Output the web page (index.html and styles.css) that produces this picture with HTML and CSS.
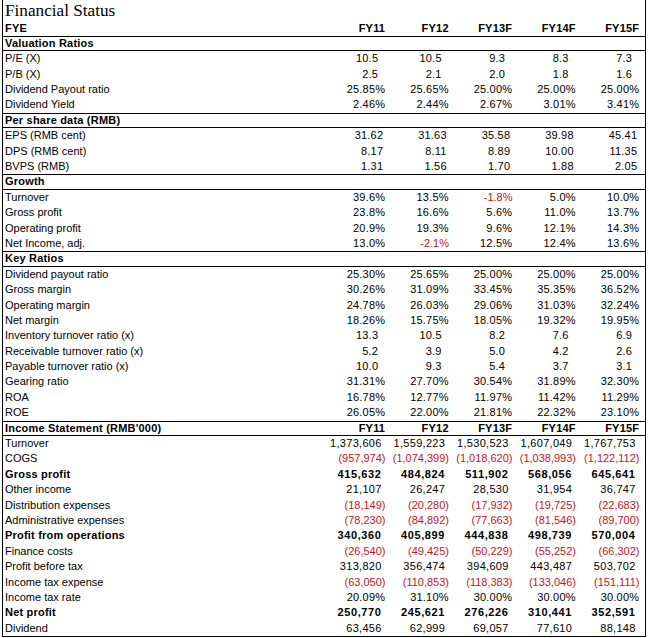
FILE: index.html
```html
<!DOCTYPE html>
<html>
<head>
<meta charset="utf-8">
<link rel="stylesheet" href="styles.css">
</head>
<body>
<div class="sheet">
  <div class="title">Financial Status</div>

  <div class="row hdr-plain"><span class="lbl b">FYE</span><span class="v b">FY11</span><span class="v b">FY12</span><span class="v b">FY13F</span><span class="v b">FY14F</span><span class="v b">FY15F</span></div>

  <div class="row sec"><span class="lbl b">Valuation Ratios</span></div>
  <div class="row"><span class="lbl">P/E (X)</span><span class="v d">10.5</span><span class="v d">10.5</span><span class="v d">9.3</span><span class="v d">8.3</span><span class="v d">7.3</span></div>
  <div class="row"><span class="lbl">P/B (X)</span><span class="v d">2.5</span><span class="v d">2.1</span><span class="v d">2.0</span><span class="v d">1.8</span><span class="v d">1.6</span></div>
  <div class="row"><span class="lbl">Dividend Payout ratio</span><span class="v">25.85%</span><span class="v">25.65%</span><span class="v">25.00%</span><span class="v">25.00%</span><span class="v">25.00%</span></div>
  <div class="row"><span class="lbl">Dividend Yield</span><span class="v">2.46%</span><span class="v">2.44%</span><span class="v">2.67%</span><span class="v">3.01%</span><span class="v">3.41%</span></div>

  <div class="row sec"><span class="lbl b">Per share data (RMB)</span></div>
  <div class="row"><span class="lbl">EPS (RMB cent)</span><span class="v e">31.62</span><span class="v e">31.63</span><span class="v e">35.58</span><span class="v e">39.98</span><span class="v e">45.41</span></div>
  <div class="row"><span class="lbl">DPS (RMB cent)</span><span class="v e">8.17</span><span class="v e">8.11</span><span class="v e">8.89</span><span class="v e">10.00</span><span class="v e">11.35</span></div>
  <div class="row"><span class="lbl">BVPS (RMB)</span><span class="v e">1.31</span><span class="v e">1.56</span><span class="v e">1.70</span><span class="v e">1.88</span><span class="v e">2.05</span></div>

  <div class="row sec"><span class="lbl b">Growth</span></div>
  <div class="row"><span class="lbl">Turnover</span><span class="v">39.6%</span><span class="v">13.5%</span><span class="v red">-1.8%</span><span class="v">5.0%</span><span class="v">10.0%</span></div>
  <div class="row"><span class="lbl">Gross profit</span><span class="v">23.8%</span><span class="v">16.6%</span><span class="v">5.6%</span><span class="v">11.0%</span><span class="v">13.7%</span></div>
  <div class="row"><span class="lbl">Operating profit</span><span class="v">20.9%</span><span class="v">19.3%</span><span class="v">9.6%</span><span class="v">12.1%</span><span class="v">14.3%</span></div>
  <div class="row"><span class="lbl">Net Income, adj.</span><span class="v">13.0%</span><span class="v red">-2.1%</span><span class="v">12.5%</span><span class="v">12.4%</span><span class="v">13.6%</span></div>

  <div class="row sec"><span class="lbl b">Key Ratios</span></div>
  <div class="row"><span class="lbl">Dividend payout ratio</span><span class="v">25.30%</span><span class="v">25.65%</span><span class="v">25.00%</span><span class="v">25.00%</span><span class="v">25.00%</span></div>
  <div class="row"><span class="lbl">Gross margin</span><span class="v">30.26%</span><span class="v">31.09%</span><span class="v">33.45%</span><span class="v">35.35%</span><span class="v">36.52%</span></div>
  <div class="row"><span class="lbl">Operating margin</span><span class="v">24.78%</span><span class="v">26.03%</span><span class="v">29.06%</span><span class="v">31.03%</span><span class="v">32.24%</span></div>
  <div class="row"><span class="lbl">Net margin</span><span class="v">18.26%</span><span class="v">15.75%</span><span class="v">18.05%</span><span class="v">19.32%</span><span class="v">19.95%</span></div>
  <div class="row"><span class="lbl">Inventory turnover ratio (x)</span><span class="v d">13.3</span><span class="v d">10.5</span><span class="v d">8.2</span><span class="v d">7.6</span><span class="v d">6.9</span></div>
  <div class="row"><span class="lbl">Receivable turnover ratio (x)</span><span class="v d">5.2</span><span class="v d">3.9</span><span class="v d">5.0</span><span class="v d">4.2</span><span class="v d">2.6</span></div>
  <div class="row"><span class="lbl">Payable turnover ratio (x)</span><span class="v d">10.0</span><span class="v d">9.3</span><span class="v d">5.4</span><span class="v d">3.7</span><span class="v d">3.1</span></div>
  <div class="row"><span class="lbl">Gearing ratio</span><span class="v">31.31%</span><span class="v">27.70%</span><span class="v">30.54%</span><span class="v">31.89%</span><span class="v">32.30%</span></div>
  <div class="row"><span class="lbl">ROA</span><span class="v">16.78%</span><span class="v">12.77%</span><span class="v">11.97%</span><span class="v">11.42%</span><span class="v">11.29%</span></div>
  <div class="row"><span class="lbl">ROE</span><span class="v">26.05%</span><span class="v">22.00%</span><span class="v">21.81%</span><span class="v">22.32%</span><span class="v">23.10%</span></div>

  <div class="row sec"><span class="lbl b">Income Statement (RMB'000)</span><span class="v b">FY11</span><span class="v b">FY12</span><span class="v b">FY13F</span><span class="v b">FY14F</span><span class="v b">FY15F</span></div>
  <div class="row"><span class="lbl">Turnover</span><span class="v n">1,373,606</span><span class="v n">1,559,223</span><span class="v n">1,530,523</span><span class="v n">1,607,049</span><span class="v n">1,767,753</span></div>
  <div class="row"><span class="lbl">COGS</span><span class="v red">(957,974)</span><span class="v red">(1,074,399)</span><span class="v red">(1,018,620)</span><span class="v red">(1,038,993)</span><span class="v red">(1,122,112)</span></div>
  <div class="row"><span class="lbl b">Gross profit</span><span class="v n bn">415,632</span><span class="v n bn">484,824</span><span class="v n bn">511,902</span><span class="v n bn">568,056</span><span class="v n bn">645,641</span></div>
  <div class="row"><span class="lbl">Other income</span><span class="v n">21,107</span><span class="v n">26,247</span><span class="v n">28,530</span><span class="v n">31,954</span><span class="v n">36,747</span></div>
  <div class="row"><span class="lbl">Distribution expenses</span><span class="v red">(18,149)</span><span class="v red">(20,280)</span><span class="v red">(17,932)</span><span class="v red">(19,725)</span><span class="v red">(22,683)</span></div>
  <div class="row"><span class="lbl">Administrative expenses</span><span class="v red">(78,230)</span><span class="v red">(84,892)</span><span class="v red">(77,663)</span><span class="v red">(81,546)</span><span class="v red">(89,700)</span></div>
  <div class="row"><span class="lbl b">Profit from operations</span><span class="v n bn">340,360</span><span class="v n bn">405,899</span><span class="v n bn">444,838</span><span class="v n bn">498,739</span><span class="v n bn">570,004</span></div>
  <div class="row"><span class="lbl">Finance costs</span><span class="v red">(26,540)</span><span class="v red">(49,425)</span><span class="v red">(50,229)</span><span class="v red">(55,252)</span><span class="v red">(66,302)</span></div>
  <div class="row"><span class="lbl">Profit before tax</span><span class="v n">313,820</span><span class="v n">356,474</span><span class="v n">394,609</span><span class="v n">443,487</span><span class="v n">503,702</span></div>
  <div class="row"><span class="lbl">Income tax expense</span><span class="v red">(63,050)</span><span class="v red">(110,853)</span><span class="v red">(118,383)</span><span class="v red">(133,046)</span><span class="v red">(151,111)</span></div>
  <div class="row"><span class="lbl">Income tax rate</span><span class="v">20.09%</span><span class="v">31.10%</span><span class="v">30.00%</span><span class="v">30.00%</span><span class="v">30.00%</span></div>
  <div class="row"><span class="lbl b">Net profit</span><span class="v n bn">250,770</span><span class="v n bn">245,621</span><span class="v n bn">276,226</span><span class="v n bn">310,441</span><span class="v n bn">352,591</span></div>
  <div class="row"><span class="lbl">Dividend</span><span class="v n">63,456</span><span class="v n">62,999</span><span class="v n">69,057</span><span class="v n">77,610</span><span class="v n">88,148</span></div>
</div>
</body>
</html>
```

FILE: styles.css
```css
html, body {
  margin: 0;
  padding: 0;
  background: #ffffff;
}

body {
  font-family: "Liberation Sans", Arial, sans-serif;
  font-size: 11px;
  color: #000000;
}

.sheet {
  box-sizing: border-box;
  margin-left: 2px;
  width: 644px;
  border-left: 1px solid #000;
  border-right: 1px solid #000;
  border-bottom: 1px solid #000;
}

.title {
  height: 20.5px;
  box-sizing: border-box;
  padding-left: 2px;
  padding-top: 1px;
  font-family: "Liberation Serif", "Times New Roman", serif;
  font-size: 17.2px;
  line-height: 19px;
  white-space: nowrap;
}

.row {
  display: grid;
  grid-template-columns: 1fr repeat(5, 63.5px);
  padding-right: 3px;
  height: 15.4px;
  line-height: 15.4px;
  box-sizing: border-box;
  white-space: nowrap;
}

.row.sec {
  border-top: 1px solid #000;
  border-bottom: 1px solid #000;
  line-height: 13.4px;
}

.lbl {
  padding-left: 2px;
}

.v {
  text-align: right;
  padding-right: 2.8px;
  letter-spacing: 0.2px;
}

.v.b {
  letter-spacing: 0.2px;
  padding-right: 2.8px;
}

.v.d {
  padding-right: 9.8px;
}

.v.e {
  padding-right: 4.8px;
}

.v.n {
  padding-right: 6.3px;
  letter-spacing: 0.3px;
}

.b {
  font-weight: bold;
}

.lbl.b {
  letter-spacing: 0.2px;
}

.bn {
  font-weight: bold;
}

.v.n.bn {
  padding-right: 6.5px;
  letter-spacing: 0.6px;
}

.v.red {
  color: #cc1122;
  letter-spacing: 0;
  padding-right: 2.5px;
}
```
